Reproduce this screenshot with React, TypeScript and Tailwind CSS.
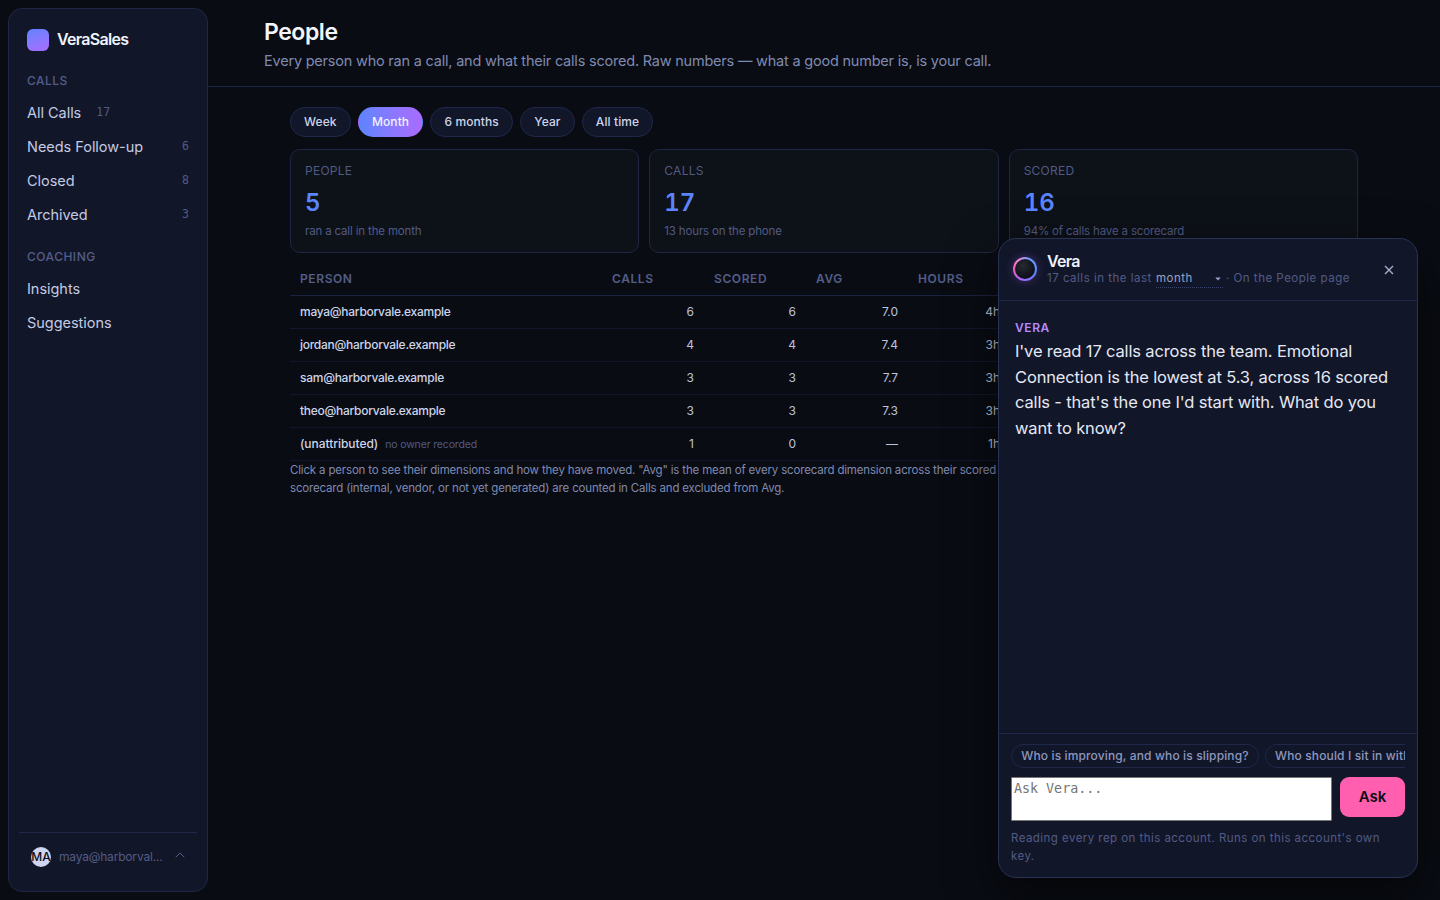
import { useState } from "react";
import { ChevronUp } from "lucide-react";

interface NavItem {
  label: string;
  count?: number;
}

interface Person {
  name: string;
  note?: string;
  calls: number;
  scored: number;
  avg: string;
  hours: string;
}

const callItems: NavItem[] = [
  { label: "All Calls", count: 17 },
  { label: "Needs Follow-up", count: 6 },
  { label: "Closed", count: 8 },
  { label: "Archived", count: 3 },
];

const coachingItems: NavItem[] = [{ label: "Insights" }, { label: "Suggestions" }];

const ranges = ["Week", "Month", "6 months", "Year", "All time"];

const stats = [
  { label: "PEOPLE", value: 5, note: "ran a call in the month" },
  { label: "CALLS", value: 17, note: "13 hours on the phone" },
  { label: "SCORED", value: 16, note: "94% of calls have a scorecard" },
];

const people: Person[] = [
  { name: "maya@harborvale.example", calls: 6, scored: 6, avg: "7.0", hours: "4h" },
  { name: "jordan@harborvale.example", calls: 4, scored: 4, avg: "7.4", hours: "3h" },
  { name: "sam@harborvale.example", calls: 3, scored: 3, avg: "7.7", hours: "3h" },
  { name: "theo@harborvale.example", calls: 3, scored: 3, avg: "7.3", hours: "3h" },
  { name: "(unattributed)", note: "no owner recorded", calls: 1, scored: 0, avg: "—", hours: "1h" },
];

function NavGroup({ title, items }: { title: string; items: NavItem[] }) {
  return (
    <div>
      <div className="h-[23.7px] text-[12px] leading-[18px] font-medium tracking-[0.5px] text-[#545e88]">{title}</div>
      {items.map((item, i) => (
        <div key={item.label} className="flex h-[34.1px] items-center text-[14.5px] tracking-[-0.03px] text-[#c3cae3]">
          <span>{item.label}</span>
          {item.count !== undefined && (
            <span className={`font-['DejaVu_Sans_Mono',monospace] text-[11.5px] text-[#525b84] ${i === 0 ? "ml-[15px]" : "ml-auto"}`}>
              {item.count}
            </span>
          )}
        </div>
      ))}
    </div>
  );
}

function Sidebar() {
  return (
    <aside className="my-2 ml-2 flex h-[884px] w-[200px] shrink-0 flex-col rounded-[14px] border border-[#202744] bg-[#121629] px-[18px] pt-5">
      <div className="mb-[21px] flex h-[22px] items-center gap-2">
        <div className="size-[22px] rounded-[6px] bg-linear-160 from-[#5b84ff] to-[#a96bff]" />
        <span className="-mt-[2px] text-[16px] leading-[20px] font-semibold tracking-[-0.7px] text-[#f0f3fc]">VeraSales</span>
      </div>
      <NavGroup title="CALLS" items={callItems} />
      <div className="h-[16.3px]" />
      <NavGroup title="COACHING" items={coachingItems} />

      {/* Account */}
      <div className="-mx-2 mt-auto flex h-[59px] items-start border-t border-[#20274a] pt-[14px] pr-[9px] pl-3">
        <div className="flex size-5 shrink-0 items-center justify-center rounded-full bg-[#cdd5f0] text-[12px] font-medium text-[#0a0d16]">
          MA
        </div>
        <span className="ml-2 text-[12px] leading-5 tracking-[-0.18px] text-[#525b84]">maya@harborval...</span>
        <ChevronUp size={16} strokeWidth={1.5} className="ml-auto text-[#545e88]" />
      </div>
    </aside>
  );
}

function PeopleTable() {
  return (
    <table className="mt-[10px] w-full table-fixed border-collapse text-[12px]">
      <colgroup>
        <col className="w-[312px]" />
        <col className="w-[102px]" />
        <col className="w-[102px]" />
        <col className="w-[102px]" />
        <col className="w-[102px]" />
        <col />
      </colgroup>
      <thead>
        <tr className="h-[32px] border-b border-[#1c2340] text-left text-[12px] tracking-[0.6px] text-[#545e88]">
          {["PERSON", "CALLS", "SCORED", "AVG", "HOURS", ""].map((h) => (
            <th key={h} className="px-[10px] py-0 font-semibold">{h}</th>
          ))}
        </tr>
      </thead>
      <tbody>
        {people.map((p) => (
          <tr key={p.name} className="h-[33px] border-b border-[#12172b] text-[#bcc3da]">
            <td className="px-[10px] py-0 text-[#cdd4ea]">
              <span className={`font-medium ${p.note ? "tracking-[-0.05px]" : "tracking-[-0.27px]"}`}>{p.name}</span>
              {p.note && <span className="ml-[7px] text-[10.5px] tracking-[-0.15px] text-[#525b84]">{p.note}</span>}
            </td>
            <td className="px-[10px] py-0 text-right">{p.calls}</td>
            <td className="px-[10px] py-0 text-right">{p.scored}</td>
            <td className="px-[10px] py-0 text-right">{p.avg}</td>
            <td className="px-[10px] py-0 text-right">{p.hours}</td>
            <td />
          </tr>
        ))}
      </tbody>
    </table>
  );
}

function VeraPanel() {
  const [question, setQuestion] = useState("");

  return (
    <section className="absolute top-[238px] left-[998px] flex h-[640px] w-[420px] flex-col overflow-hidden rounded-[18px] border border-[#2a3253] bg-[#121629] shadow-[0_18px_50px_rgba(0,0,0,0.55)]">
      {/* Header */}
      <div className="flex h-[62px] shrink-0 items-center border-b border-[#20274a] pr-[23px] pl-[14px]">
        <div className="mb-px size-6 shrink-0 rounded-full bg-[conic-gradient(from_20deg,#6f9bff,#5b84ff_25%,#a96bff_50%,#ff5fae_72%,#e58ad8_85%,#6f9bff)] p-[2px] shadow-[0_0_10px_rgba(169,107,255,0.3)]">
          <div className="size-full rounded-full bg-[radial-gradient(circle_at_40%_35%,#252932,#0b0e16_75%)]" />
        </div>
        <div className="ml-[10px]">
          <div className="text-[16px] leading-[19px] font-semibold tracking-[-0.7px] text-[#f0f3fc]">Vera</div>
          <div className="flex h-[17px] items-center text-[11.5px] tracking-[0.5px] text-[#525b84]">
            <span className="w-[105px] whitespace-nowrap">17 calls in the last</span>
            <span className="ml-1 flex h-[17px] w-[67px] items-center border-b border-dotted border-[#39436b] pt-px text-[#98a2c6]">
              month
              <svg className="mr-[2px] ml-auto" width="6" height="4" viewBox="0 0 6 4">
                <path d="M0.3 0.5h5.4L3 3.5z" fill="#98a2c6" />
              </svg>
            </span>
            <span className="ml-[3px]">· On the People page</span>
          </div>
        </div>
        <svg className="ml-auto" width="10" height="10" viewBox="0 0 10 10" stroke="#aab2cf" strokeWidth="1.3">
          <path d="M1 1l8 8M9 1l-8 8" />
        </svg>
      </div>

      {/* Conversation */}
      <div className="flex-1 px-4 pt-[18px]">
        <div className="text-[12px] leading-[18px] font-semibold tracking-[0.6px] text-[#b78aff]">VERA</div>
        <p className="mt-[2.4px] text-[16.5px] leading-[25.5px] tracking-[-0.15px] text-[#e4e8f4]">
          I've read 17 calls across the team. Emotional
          <br />
          Connection is the lowest at 5.3, across 16 scored
          <br />
          calls - that's the one I'd start with. What do you
          <br />
          want to know?
        </p>
      </div>

      {/* Composer */}
      <div className="h-[144px] shrink-0 border-t border-[#20274a] px-3 pt-[10px]">
        <div className="flex gap-[6px] overflow-hidden text-[12px] font-medium tracking-[0.13px] whitespace-nowrap text-[#8e98bf]">
          <span className="flex h-6 w-[248px] shrink-0 items-center justify-center rounded-full border border-[#20274a]">
            Who is improving, and who is slipping?
          </span>
          <span className="flex h-6 shrink-0 items-center rounded-full border border-[#20274a] px-[9px]">
            Who should I sit in with this week?
          </span>
        </div>
        <div className="mt-[9px] flex items-start gap-2">
          <textarea
            value={question}
            onChange={(e) => setQuestion(e.target.value)}
            placeholder="Ask Vera..."
            className="h-11 w-[321px] resize-none rounded-[1px] border border-[#767676] bg-white px-[2px] pt-[3px] pb-px font-['DejaVu_Sans_Mono',monospace] text-[13.333px] leading-4 text-black placeholder:text-[#757575]"
          />
          <button className="h-10 flex-1 rounded-[9px] bg-[#ff5fae] pt-px text-[15px] font-semibold text-[#0a0d16]">Ask</button>
        </div>
        <p className="mt-2 text-[11.5px] leading-[18px] tracking-[0.45px] text-[#525b84]">
          Reading every rep on this account. Runs on this account's own
          <br />
          key.
        </p>
      </div>
    </section>
  );
}

export default function App() {
  const [range, setRange] = useState("Month");

  return (
    <div className="relative flex h-[900px] w-[1440px] overflow-hidden bg-[#090c13] font-['Inter','Liberation_Sans',sans-serif]">
      <Sidebar />

      <main className="min-w-0 flex-1">
        <header className="h-[87px] border-b border-[#1c2340] pt-[17px] pl-14">
          <h1 className="text-[23px] leading-[30px] font-semibold tracking-[-0.45px] text-[#f3f5fc]">People</h1>
          <p className="mt-1 text-[14.5px] leading-5 tracking-[-0.21px] text-[#808ab0]">
            Every person who ran a call, and what their calls scored. Raw numbers — what a good number is, is your call.
          </p>
        </header>

        <div className="mx-auto w-[1068px] pt-5">
          <div className="flex gap-[7.3px]">
            {ranges.map((r) => (
              <button
                key={r}
                onClick={() => setRange(r)}
                className={`h-[30px] rounded-full border px-[13px] text-[12px] font-medium tracking-[0.1px] ${
                  r === range
                    ? "border-transparent bg-linear-to-r from-[#5b84ff] to-[#a96bff] text-[#f0f3fc]"
                    : "border-[#20274a] bg-[#121629] text-[#cdd4ea]"
                }`}
              >
                {r}
              </button>
            ))}
          </div>

          <div className="mt-3 grid grid-cols-3 gap-[10px]">
            {stats.map((s) => (
              <div key={s.label} className="h-[104px] rounded-[10px] border border-[#1f2643] bg-[#0d1118] px-[14px] pt-3">
                <div className="text-[12px] leading-[18px] tracking-[0.25px] text-[#525b84]">{s.label}</div>
                <div className="mt-[7px] text-[24px] leading-8 font-semibold tabular-nums text-[#5b84ff]">{s.value}</div>
                <div className="mt-[3px] text-[11.5px] leading-[18px] tracking-[-0.16px] text-[#525b84]">{s.note}</div>
              </div>
            ))}
          </div>

          <PeopleTable />

          <p className="text-[11.5px] leading-[18px] tracking-[-0.17px] whitespace-nowrap text-[#808ab0]">
            Click a person to see their dimensions and how they have moved. "Avg" is the mean of every scorecard dimension across their scored calls. Calls without a
            <br />
            scorecard (internal, vendor, or not yet generated) are counted in Calls and excluded from Avg.
          </p>
        </div>
      </main>

      <VeraPanel />
    </div>
  );
}
